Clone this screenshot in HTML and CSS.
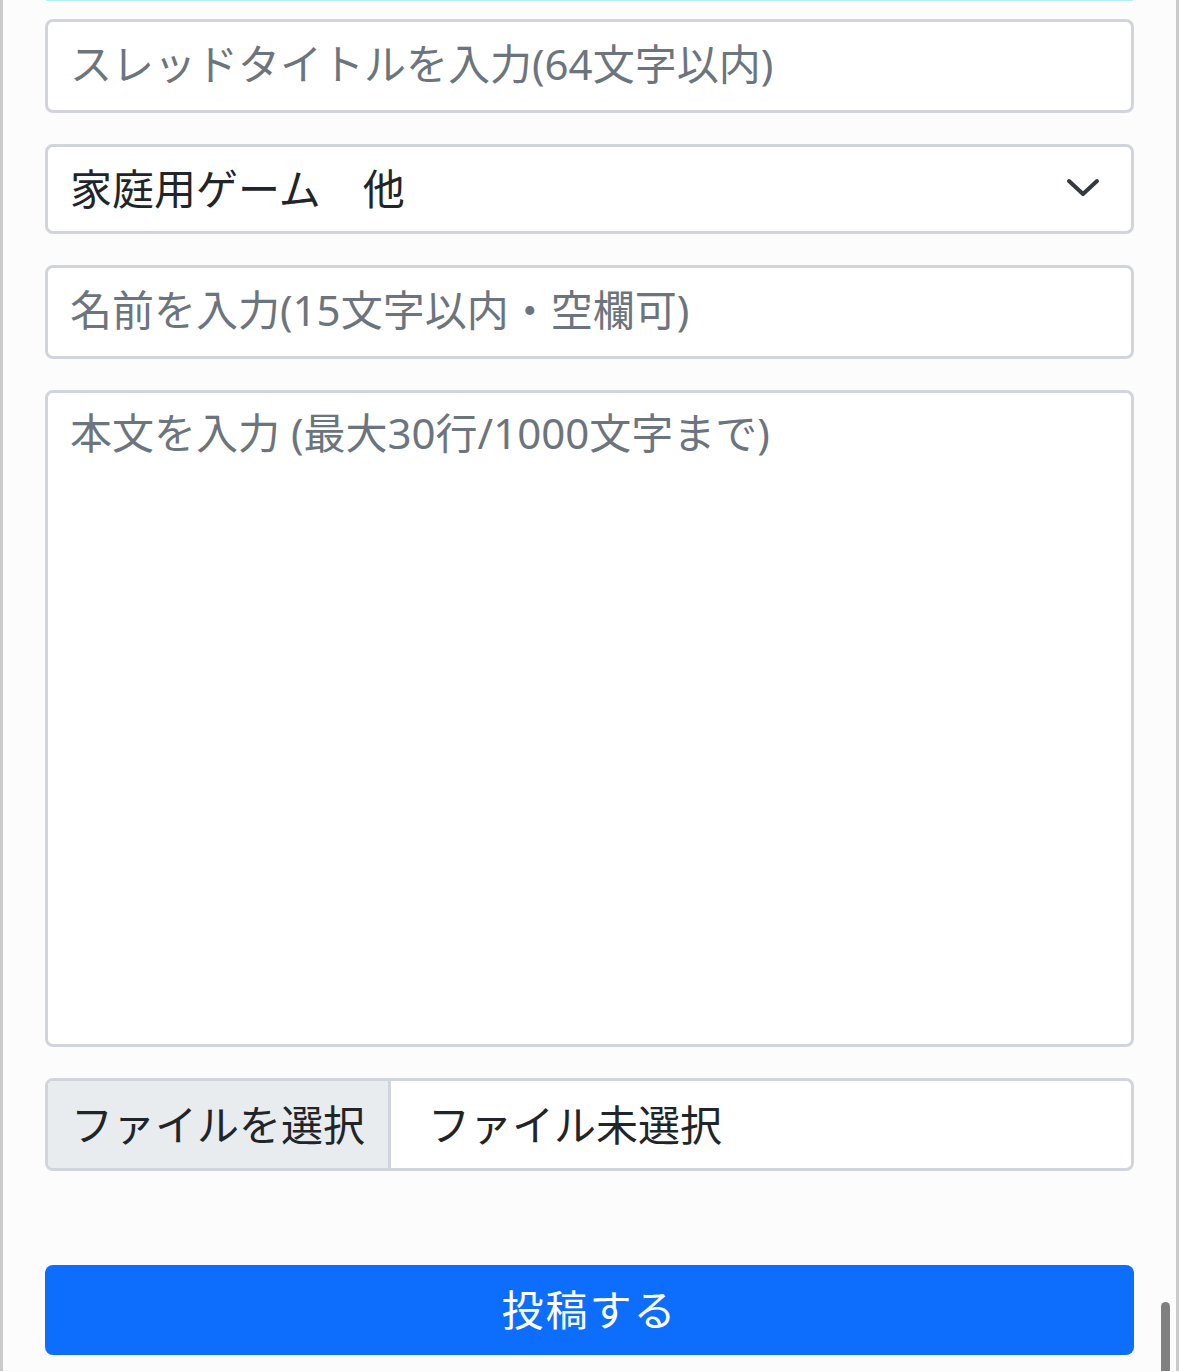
FILE: index.html
```html
<!DOCTYPE html>
<html lang="ja">
<head>
<meta charset="utf-8">
<link rel="stylesheet" href="styles.css">
</head>
<body>
<div class="page">
  <div class="topline"></div>
  <form class="form">
    <input class="field" type="text" placeholder="スレッドタイトルを入力(64文字以内)">
    <div class="select">
      <span>家庭用ゲーム　他</span>
      <svg class="chev" width="34" height="20" viewBox="0 0 34 20"><path d="M3 3 L17 16 L31 3" fill="none" stroke="#343a40" stroke-width="4" stroke-linecap="round" stroke-linejoin="round"/></svg>
    </div>
    <input class="field" type="text" placeholder="名前を入力(15文字以内・空欄可)">
    <textarea class="area" placeholder="本文を入力 (最大30行/1000文字まで)"></textarea>
    <div class="file">
      <div class="file-btn">ファイルを選択</div>
      <div class="file-name">ファイル未選択</div>
    </div>
    <div class="submit">投稿する</div>
  </form>
  <div class="scrollbar"></div>
</div>
</body>
</html>
```
FILE: styles.css
```css
html, body {
  margin: 0;
  padding: 0;
  background: #fcfcfc;
}
body {
  font-family: "Noto Sans", "Noto Sans CJK JP", sans-serif;
  overflow: hidden;
}
.page {
  position: relative;
  box-sizing: border-box;
  width: 1179px;
  height: 1372px;
  border-left: 3px solid #cbcbcb;
  border-right: 3px solid #cbcbcb;
  padding: 0 42px;
  background: #fcfcfc;
}
.topline {
  height: 2px;
  margin-top: -1px;
  margin-left: 1px;
  margin-right: 1px;
  background: #b3ecfb;
  border-radius: 1px;
}
.form {
  display: flex;
  flex-direction: column;
  gap: 31px;
  margin-top: 18px;
}
.field, .select, .area, .file {
  box-sizing: border-box;
  width: 100%;
  border: 3px solid #d1d5db;
  border-radius: 8px;
  background: #fff;
  font-family: inherit;
  font-size: 42px;
  color: #212529;
  outline: none;
  margin: 0;
}
.field {
  height: 94px;
  padding: 0 22px 6px 22px;
}
.field::placeholder, .area::placeholder {
  color: #6c757d;
  opacity: 1;
}
.select {
  height: 90px;
  padding: 0 31px 6px 22px;
  display: flex;
  align-items: center;
  justify-content: space-between;
}
.chev {
  display: block;
  margin-top: 4px;
}
.area {
  height: 657px;
  padding: 10px 22px;
  line-height: 60px;
  resize: none;
  display: block;
}
.file {
  height: 93px;
  display: flex;
  overflow: hidden;
}
.file-btn {
  box-sizing: border-box;
  width: 343px;
  background: #e9ecef;
  border-right: 3px solid #d1d5db;
  display: flex;
  align-items: center;
  padding: 0 0 5px 23px;
}
.file-name {
  display: flex;
  align-items: center;
  padding: 0 0 5px 37px;
}
.submit {
  margin-top: 63px;
  height: 90px;
  border-radius: 8px;
  background: #0d6efd;
  color: #fff;
  font-size: 42px;
  display: flex;
  align-items: center;
  justify-content: center;
  letter-spacing: 2px;
  padding-bottom: 5px;
  box-sizing: border-box;
}
.scrollbar {
  position: absolute;
  right: 6px;
  top: 1303px;
  width: 9px;
  height: 80px;
  border-radius: 5px;
  background: #808080;
}
```
